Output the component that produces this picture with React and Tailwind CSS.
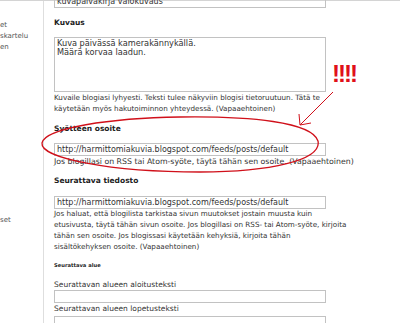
const inputCls =
  "block w-[272px] h-[13px] border border-[#c2c2c2] bg-transparent px-[2px] text-[8px] leading-none text-[#333] outline-none font-['DejaVu_Sans',sans-serif]";

function Heading({ children, className = "" }) {
  return (
    <h3 className={`font-bold text-[7.5px] leading-[10px] text-[#222] ${className}`}>
      {children}
    </h3>
  );
}

function Sidebar() {
  return (
    <div className="w-[44px] shrink-0 border-r border-[#dedede] text-[7px] leading-[11px] text-[#555]">
      <div className="mt-[19px] whitespace-nowrap">
        <div>et</div>
        <div>skartelu</div>
        <div>en</div>
      </div>
      <div className="mt-[162px] whitespace-nowrap">set</div>
    </div>
  );
}

function Annotations() {
  return (
    <>
      <svg
        className="absolute inset-0 pointer-events-none"
        width="400"
        height="323"
        viewBox="0 0 400 323"
      >
        <path
          d="M 318 141 C 312 122, 250 116, 180 117 C 110 118, 45 128, 42 143 C 40 158, 110 172, 200 172 C 270 172, 322 160, 318 141 Z"
          fill="none"
          stroke="#d0101a"
          strokeWidth="1.3"
        />
        <path d="M 333 92 L 300 125" fill="none" stroke="#d0101a" strokeWidth="1" />
        <path d="M 299 114 L 300 125 L 311 123" fill="none" stroke="#d0101a" strokeWidth="1" />
      </svg>
      <div className="absolute left-[332px] top-[62px] font-['Liberation_Sans',sans-serif] font-bold text-[24px] leading-none tracking-[-2px] text-[#e0101a]">
        !!!!
      </div>
    </>
  );
}

export default function App() {
  return (
    <div className="relative w-[400px] h-[323px] overflow-hidden bg-white font-['DejaVu_Sans',sans-serif] text-[#333]">
      <div className="h-px bg-[#d4d4d4]" />
      <div className="flex">
        <Sidebar />
        <main className="flex-1 pl-[10px]">
          <input className={`${inputCls} -mt-[6px]`} readOnly value="kuvapäiväkirja valokuvaus" />

          <Heading className="mt-[10px]">Kuvaus</Heading>
          <textarea
            className="block mt-[9px] w-[272px] h-[55px] border border-[#c2c2c2] px-[2px] pt-[1px] text-[8.2px] leading-[9px] text-[#333] resize-none outline-none font-['DejaVu_Sans',sans-serif]"
            readOnly
            value={"Kuva päivässä kamerakännykällä.\nMäärä korvaa laadun."}
          />
          <p className="text-[7.2px] leading-[11px] whitespace-nowrap">
            Kuvaile blogiasi lyhyesti. Teksti tulee näkyviin blogisi tietoruutuun. Tätä te
            <br />
            käytetään myös hakutoiminnon yhteydessä. (Vapaaehtoinen)
          </p>

          <Heading className="mt-[10px]">Syötteen osoite</Heading>
          <input
            className={`${inputCls} mt-[9px]`}
            readOnly
            value="http://harmittomiakuvia.blogspot.com/feeds/posts/default"
          />
          <p className="text-[7.8px] leading-[11px] whitespace-nowrap">
            Jos blogillasi on RSS tai Atom-syöte, täytä tähän sen osoite. (Vapaaehtoinen)
          </p>

          <Heading className="mt-[9px]">Seurattava tiedosto</Heading>
          <input
            className={`${inputCls} mt-[10px]`}
            readOnly
            value="http://harmittomiakuvia.blogspot.com/feeds/posts/default"
          />
          <p className="-mt-px text-[7.2px] leading-[11px] whitespace-nowrap">
            Jos haluat, että blogilista tarkistaa sivun muutokset jostain muusta kuin
            <br />
            etusivusta, täytä tähän sivun osoite. Jos blogillasi on RSS- tai Atom-syöte, kirjoita
            <br />
            tähän sen osoite. Jos blogissasi käytetään kehyksiä, kirjoita tähän
            <br />
            sisältökehyksen osoite. (Vapaaehtoinen)
          </p>

          <h4 className="mt-[8px] font-bold text-[5.2px] leading-[10px] text-[#222]">
            Seurattava alue
          </h4>
          <label className="block mt-[10px] text-[7.5px] leading-[10px] text-[#333]">
            Seurattavan alueen aloitusteksti
          </label>
          <input className={`${inputCls} h-[11px]`} readOnly value="" />
          <label className="block mt-[1px] text-[7.5px] leading-[10px] text-[#333]">
            Seurattavan alueen lopetusteksti
          </label>
          <input className={`${inputCls} mt-[2px]`} readOnly value="" />
        </main>
      </div>
      <Annotations />
    </div>
  );
}
